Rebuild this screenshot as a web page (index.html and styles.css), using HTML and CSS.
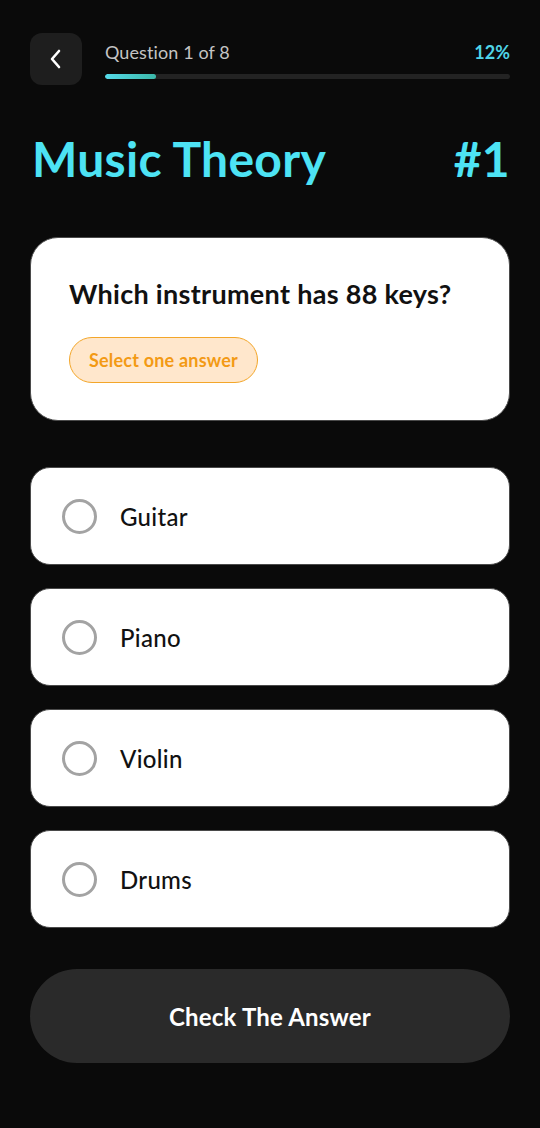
FILE: index.html
```html
<!DOCTYPE html>
<html lang="en">
<head>
<meta charset="utf-8">
<link rel="stylesheet" href="styles.css">
</head>
<body>
<main class="screen">
  <header class="topbar">
    <button class="back" aria-label="Back">
      <svg width="18" height="22" viewBox="0 0 18 22"><path d="M12 3 L5 11 L12 19" fill="none" stroke="#fff" stroke-width="2.6" stroke-linecap="round" stroke-linejoin="round"/></svg>
    </button>
    <div class="progress">
      <div class="progress-labels">
        <span class="qcount">Question 1 of 8</span>
        <span class="pct">12%</span>
      </div>
      <div class="track"><div class="fill" style="width:12.5%"></div></div>
    </div>
  </header>

  <div class="title-row">
    <h1 class="title">Music Theory</h1>
    <span class="num">#1</span>
  </div>

  <section class="qcard">
    <h2 class="question">Which instrument has 88 keys?</h2>
    <span class="badge">Select one answer</span>
  </section>

  <ul class="options">
    <li class="option"><span class="radio"></span><span class="label">Guitar</span></li>
    <li class="option"><span class="radio"></span><span class="label">Piano</span></li>
    <li class="option"><span class="radio"></span><span class="label">Violin</span></li>
    <li class="option"><span class="radio"></span><span class="label">Drums</span></li>
  </ul>

  <button class="check">Check The Answer</button>
</main>
</body>
</html>
```

FILE: styles.css
```css
* { box-sizing: border-box; }
html, body { margin: 0; padding: 0; background: #0a0a0a; }
body { font-family: "Lato", "Inter", "Liberation Sans", sans-serif; color: #fff; }
.screen { padding: 33px 30px 0; display: flex; flex-direction: column; }

.topbar { display: flex; align-items: flex-start; gap: 23px; }
.back {
  width: 52px; height: 52px; border-radius: 12px; border: none;
  background: #1e1e1e; display: flex; align-items: center; justify-content: center;
  padding: 0; flex: none;
}
.progress { flex: 1; padding-top: 8px; }
.progress-labels { display: flex; justify-content: space-between; align-items: baseline; height: 24px; }
.qcount { font-size: 18px; color: #c4c4c4; font-weight: 400; letter-spacing: 0.1px; }
.pct { font-size: 18px; color: #4fd5e8; font-weight: 700; }
.track { margin-top: 9px; height: 5px; border-radius: 3px; background: #232323; overflow: hidden; }
.fill { height: 100%; border-radius: 3px; background: linear-gradient(90deg, #55dbea, #3bb7a8); }

.title-row { display: flex; justify-content: space-between; align-items: center; margin-top: 46px; }
.title, .num { margin: 0; font-size: 48px; font-weight: 700; color: #4de3f4; line-height: 56px; letter-spacing: 0.3px; }
.title { padding-left: 2px; }

.qcard {
  margin-top: 50px; background: #fff; border: 1px solid #4a4a4a; border-radius: 28px;
  padding: 40px 38px 36px; display: flex; flex-direction: column; align-items: flex-start;
  height: 184px;
}
.question { margin: 0; font-size: 27px; font-weight: 700; color: #111; line-height: 32px; letter-spacing: 0.3px; }
.badge {
  margin-top: 27px; height: 46px; padding: 0 19px; border-radius: 23px;
  background: #ffe7cc; border: 1.5px solid #f3a629; color: #f39a14;
  font-size: 18px; font-weight: 700; display: inline-flex; align-items: center; letter-spacing: 0.2px;
}

.options { list-style: none; margin: 46px 0 0; padding: 0; display: flex; flex-direction: column; gap: 23px; }
.option {
  height: 98px; background: #fff; border: 1px solid #4a4a4a; border-radius: 20px;
  display: flex; align-items: center; padding: 0 0 0 31px; gap: 23px;
}
.radio { width: 35px; height: 35px; border-radius: 50%; border: 3px solid #a3a3a3; flex: none; }
.label { font-size: 24px; font-weight: 500; color: #111; letter-spacing: 0.3px; }

.check {
  margin-top: 41px; height: 94px; border: none; border-radius: 47px; background: #2a2a2a;
  color: #fff; font-family: inherit; font-size: 24px; font-weight: 700; width: 100%; letter-spacing: 0.2px;
}
```
